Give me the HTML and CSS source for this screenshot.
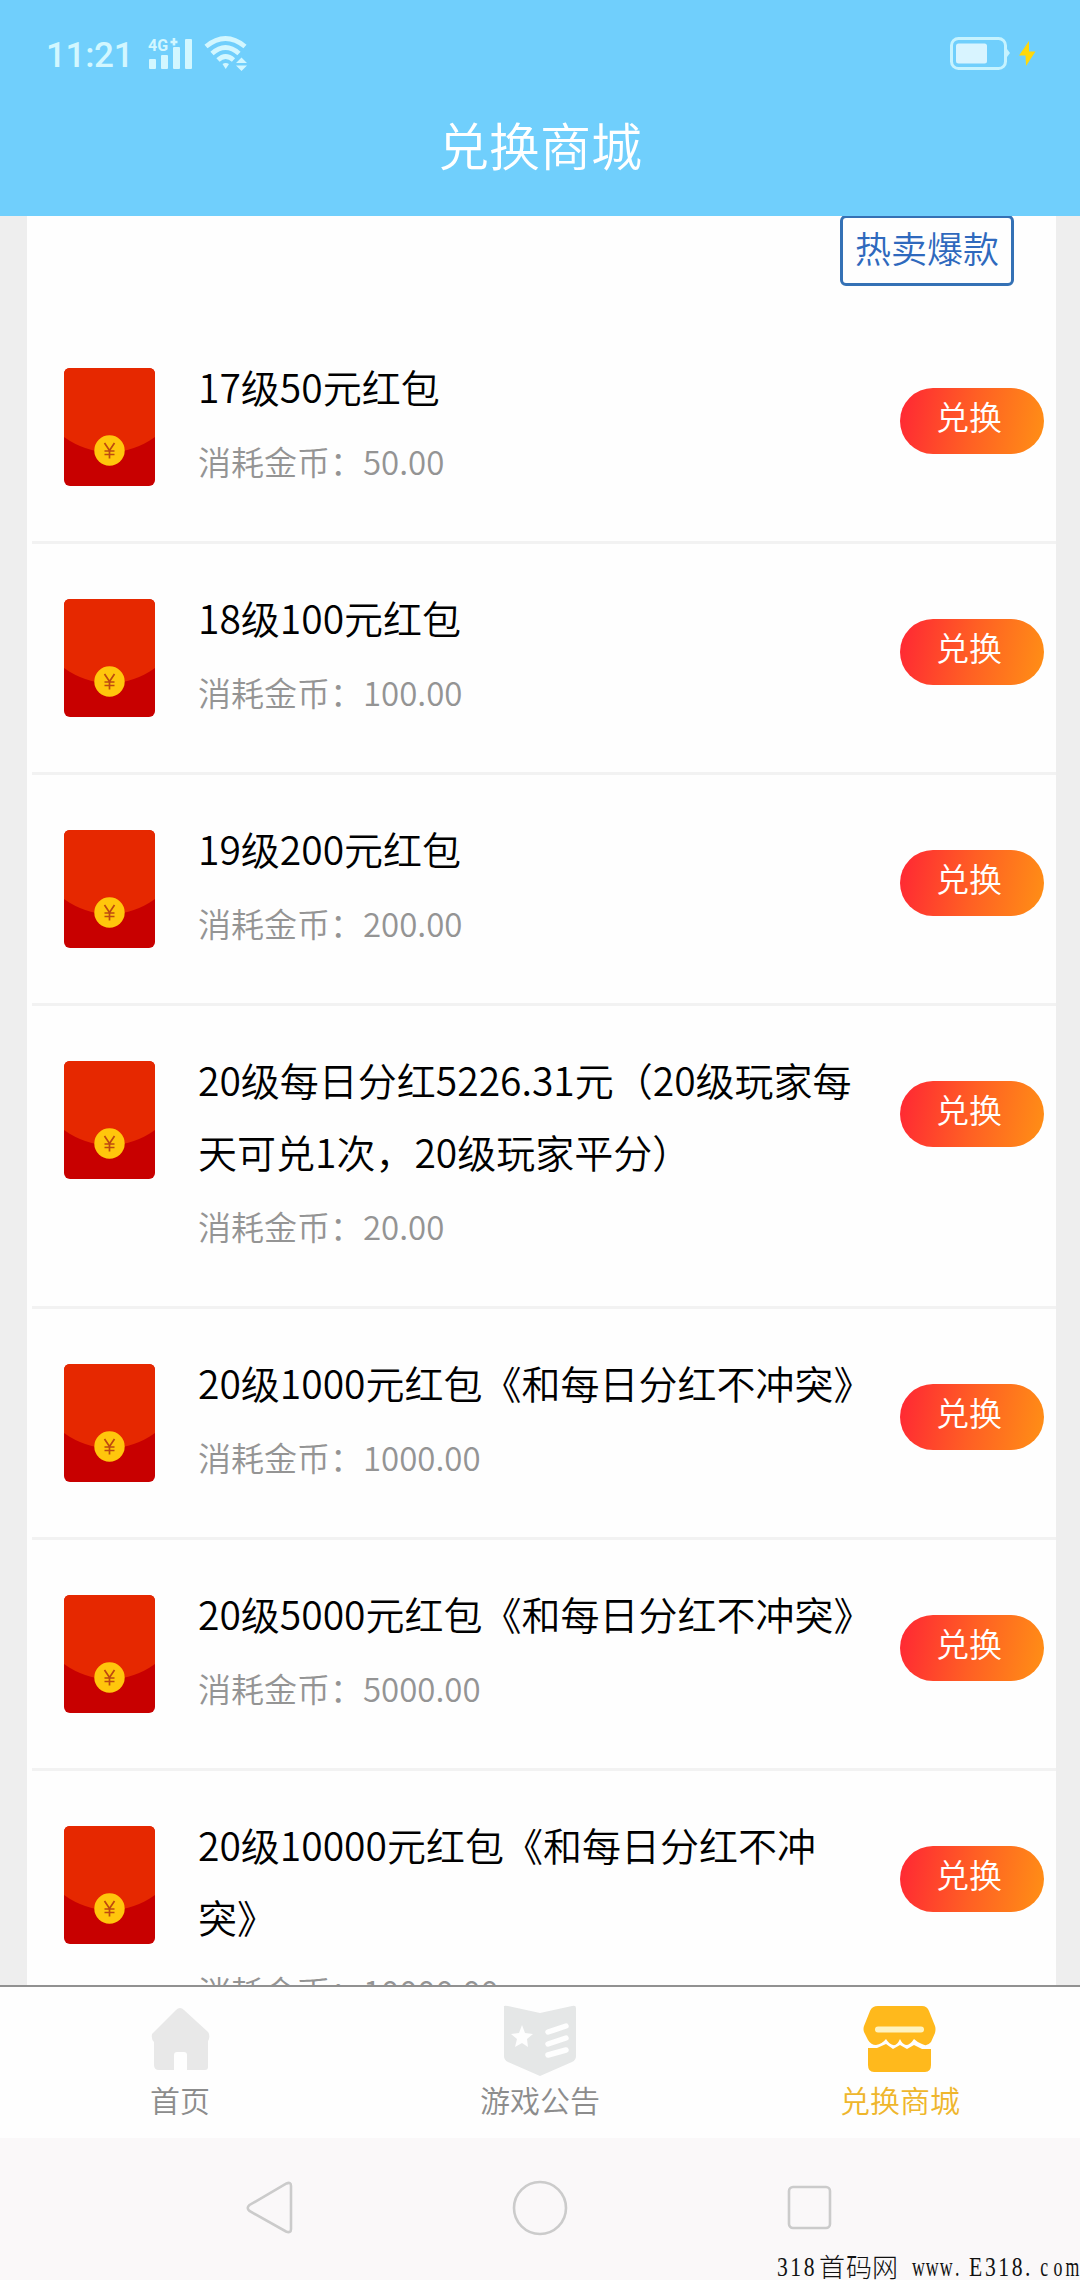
FILE: index.html
```html
<!DOCTYPE html>
<html lang="zh-CN">
<head>
<meta charset="utf-8">
<title>兑换商城</title>
<link rel="stylesheet" href="styles.css">
</head>
<body>
<svg width="0" height="0" class="defs" aria-hidden="true">
  <symbol id="envelope" viewBox="0 0 91 118">
    <rect width="91" height="118" rx="6" fill="#c80000"/>
    <path d="M0 6Q0 0 6 0H85Q91 0 91 6V69Q70 84 45.500 84Q21 84 0 69Z" fill="#e62800"/>
    <circle cx="45.500" cy="82.500" r="15.200" fill="#ffc60c"/>
    <path d="M40.500 75L45.500 82.500L50.500 75M45.500 82.500V90.500M40.500 83H50.500M40.500 86.500H50.500" fill="none" stroke="#bd4a10" stroke-width="1.700"/>
  </symbol>
</svg>
<div class="screen">
  <header class="header">
    <div class="status">
      <span class="clock">11:21</span>
      <svg class="signal" width="46" height="34" viewBox="0 0 46 34">
        <g fill="#d2f7ff">
          <rect x="1" y="22" width="7" height="10" rx="1"/><rect x="13" y="18" width="7" height="14" rx="1"/>
          <rect x="25" y="10" width="7" height="22" rx="1"/><rect x="37" y="2" width="7" height="30" rx="1"/>
        </g>
        <text x="0" y="13.500" class="net">4G</text>
        <path d="M26 1V8.500M22.500 5H29.500" stroke="#d2f7ff" stroke-width="2.600"/>
      </svg>
      <svg class="wifi" width="44" height="36" viewBox="0 0 44 36">
        <g fill="none" stroke="#d2f7ff" stroke-width="4.800">
          <path d="M2 10.500Q21.500-5.500 41 10.500"/><path d="M8 17.500Q21.500 5.500 35 17.500"/><path d="M14 24Q21.500 17 29.500 24"/>
        </g>
        <path d="M18.500 28Q21.500 26 25 28L21.700 33ZM32 27L37.500 21.500L43 27ZM32 29.500H43L37.500 35Z" fill="#d2f7ff"/>
      </svg>
      <svg class="battery" width="88" height="36" viewBox="0 0 88 36">
        <rect x="1.500" y="2.500" width="54" height="30" rx="7" fill="none" stroke="#c6f3ff" stroke-width="3"/>
        <rect x="6" y="7.500" width="31" height="20" rx="2.500" fill="#d8f4ff"/>
        <path d="M57 13L60 17L57 21Z" fill="#c6f3ff"/>
        <path d="M79 5L69 19.500H75.500L76 30L85.500 15.500H79Z" fill="#ffd80a"/>
      </svg>
    </div>
    <h1 class="title">兑换商城</h1>
  </header>

  <main class="content">
    <div class="panel">
      <div class="tags"><span class="tag">热卖爆款</span></div>
      <ul class="list">
        <li class="item"><svg class="packet"><use href="#envelope"/></svg><div class="info"><p class="name">17级50元红包</p><p class="cost">消耗金币：50.00</p></div><button class="redeem">兑换</button></li>
        <li class="item"><svg class="packet"><use href="#envelope"/></svg><div class="info"><p class="name">18级100元红包</p><p class="cost">消耗金币：100.00</p></div><button class="redeem">兑换</button></li>
        <li class="item"><svg class="packet"><use href="#envelope"/></svg><div class="info"><p class="name">19级200元红包</p><p class="cost">消耗金币：200.00</p></div><button class="redeem">兑换</button></li>
        <li class="item"><svg class="packet"><use href="#envelope"/></svg><div class="info"><p class="name">20级每日分红5226.31元（20级玩家每天可兑1次，20级玩家平分）</p><p class="cost">消耗金币：20.00</p></div><button class="redeem">兑换</button></li>
        <li class="item"><svg class="packet"><use href="#envelope"/></svg><div class="info"><p class="name">20级1000元红包《和每日分红不冲突》</p><p class="cost">消耗金币：1000.00</p></div><button class="redeem">兑换</button></li>
        <li class="item"><svg class="packet"><use href="#envelope"/></svg><div class="info"><p class="name">20级5000元红包《和每日分红不冲突》</p><p class="cost">消耗金币：5000.00</p></div><button class="redeem">兑换</button></li>
        <li class="item"><svg class="packet"><use href="#envelope"/></svg><div class="info"><p class="name">20级10000元红包《和每日分红不冲突》</p><p class="cost">消耗金币：10000.00</p></div><button class="redeem">兑换</button></li>
      </ul>
    </div>
  </main>

  <nav class="tabs">
    <a class="tab">
      <svg width="76" height="76" viewBox="0 0 76 76"><path d="M38 4Q40 4 42 6L66 28Q68 30 67 35L66 37V63Q66 66 63 66H45V51Q45 48 42 48H35Q32 48 32 51V66H17Q12 66 12 61V38Q9 35 10 30L34 6Q36 4 38 4Z" fill="#e8e8e8"/></svg>
      <span>首页</span>
    </a>
    <a class="tab">
      <svg width="76" height="76" viewBox="0 0 76 76"><path d="M2 3Q1 1 6 2L38 9L70 2Q74 1 74 4V52Q74 56 70 58L38 72L6 58Q2 56 2 52Z" fill="#e5e7e7"/><path d="M20 21L23 29L31 30L25 35L26 43L20 39L13 43L15 35L9 30L17 29Z" fill="#fefefe"/><path d="M46 28L64 22M46 40L64 34M46 51L64 46" fill="none" stroke="#fefefe" stroke-width="5.500" stroke-linecap="round"/></svg>
      <span>游戏公告</span>
    </a>
    <a class="tab active">
      <svg width="76" height="76" viewBox="0 0 76 76"><path d="M16 2H60Q65 2 67 7L73 22Q74 25 73 29L69 38Q65 43 60 40Q55 38 52 35Q48 41 44 41Q40 40 38 35Q35 42 31 41Q27 40 24 35Q20 40 14 41Q9 41 6 36L2 28Q1 25 2 22L8 7Q10 2 16 2Z" fill="#ffb91c"/><path d="M6 44H15L24 40L31 45L38 41L45 45L52 41L60 45H69V61Q69 68 63 68H12Q6 68 6 61Z" fill="#ffb91c"/><path d="M16 25.500H59" stroke="#fff3c0" stroke-width="6" stroke-linecap="round"/></svg>
      <span>兑换商城</span>
    </a>
  </nav>

  <footer class="system">
    <svg width="48" height="56" viewBox="0 0 48 56"><path d="M41.500 3.500Q46 1.500 46 6V49Q46 53.500 41 51.500L4.500 31Q1 28 4.500 25Z" fill="none" stroke="#cbcbcb" stroke-width="2.600"/></svg>
    <svg width="56" height="56" viewBox="0 0 56 56"><circle cx="28" cy="28" r="26" fill="none" stroke="#cbcbcb" stroke-width="2.600"/></svg>
    <svg width="46" height="46" viewBox="0 0 46 46"><rect x="2" y="2" width="41" height="41" rx="4" fill="none" stroke="#cbcbcb" stroke-width="2.600"/></svg>
    <svg class="watermark" width="306" height="30" viewBox="0 0 306 30">
      <text transform="translate(3 26) scale(.8 1)" x="0 16.500 33.500">318</text>
      <text x="45 72 98" y="27" class="han">首码网</text>
      <text transform="translate(138 26) scale(.66 1)" x="0 21 42 65">www.</text>
      <text transform="translate(195 26) scale(.8 1)" x="0 20 36.500 53.500 70">E318.</text>
      <text transform="translate(265 26) scale(.66 1)" x="2 22 40">com</text>
    </svg>
  </footer>
</div>
</body>
</html>
```
FILE: styles.css
```css
* { box-sizing: border-box; margin: 0; padding: 0; }
body { font-family: "Noto Sans CJK SC", sans-serif; font-weight: 350; background: #eee; }
.defs { position: absolute; }
.screen { width: 1080px; height: 2280px; display: flex; flex-direction: column; overflow: hidden; }

.header { height: 216px; flex: none; background: #70cffc; color: #fff; }
.status { height: 108px; display: flex; align-items: center; padding: 0 42px 0 46px; }
.clock { width: 102px; font: 500 35px/36px Roboto, sans-serif; letter-spacing: -0.300px; color: #d2f7ff; padding-top: 3px; }
.net { font: 700 16px Roboto, sans-serif; fill: #d2f7ff; }
.wifi { margin-left: 10px; }
.battery { margin-left: auto; }
.title { font-size: 51px; line-height: 72px; font-weight: 350; text-align: center; }

.content { height: 1769px; flex: none; overflow: hidden; padding: 0 24px 0 27px; }
.panel { background: #fefefe; padding-left: 5px; }
.tags { height: 97px; display: flex; justify-content: flex-end; align-items: flex-start; padding-right: 42px; }
.tag { width: 174px; height: 71px; margin-top: -1px; border: 3px solid #3471b5; border-radius: 6px; color: #2f69bd; font-size: 36px; line-height: 59px; text-align: center; }
.list { list-style: none; }
.item { display: flex; align-items: flex-start; padding: 37px 12px 44px 32px; border-bottom: 3px solid #f2f2f2; }
.packet { width: 91px; height: 118px; flex: none; margin-top: 18px; }
.info { width: 668px; margin-left: 43px; }
.name { font-size: 39px; line-height: 72px; color: #000; }
.cost { margin-top: 3px; font-size: 33px; line-height: 72px; color: #949494; }
.redeem { width: 144px; height: 66px; margin: 38px 0 0 auto; padding: 0 6px 9px 0; border: 0; border-radius: 33px; background: linear-gradient(100deg, #ff2634, #ff5f24 50%, #ff9015); color: #fff; font: 350 33px/57px "Noto Sans CJK SC", sans-serif; }

.tabs { height: 153px; flex: none; display: flex; background: #fefefe; border-top: 2px solid #919191; }
.tab { flex: 1; display: flex; flex-direction: column; align-items: center; padding-top: 17px; color: #8c8c8c; font-size: 30px; line-height: 38px; }
.tab svg { flex: none; }
.active { color: #efb62c; }

.system { flex: 1; position: relative; display: flex; align-items: center; justify-content: space-between; padding: 0 247px 2px 245px; background: #faf8f9; }
.watermark { position: absolute; right: 0; bottom: 0; font: 27px "Liberation Serif", serif; fill: #111; }
.han { font: 300 26px "Noto Sans CJK SC", sans-serif; }
```
